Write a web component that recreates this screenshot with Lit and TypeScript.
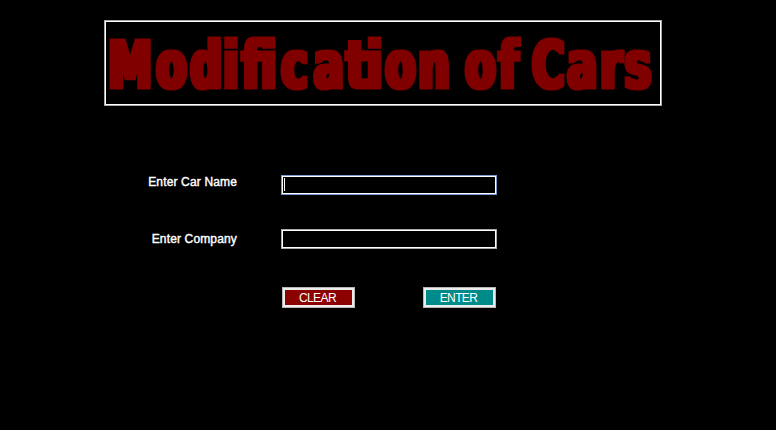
import { LitElement, html, css, svg } from "lit";
import { customElement } from "lit/decorators.js";

const SQUEEZE = 0.67;

interface Word {
  text: string;
  starts: number[];
}

// Origin of every letter, in pixels from the frame's inner edge.
const WORDS: Word[] = [
  { text: "Modification", starts: [3.6, 51.5, 85.5, 118.4, 137.2, 156.2, 176.4, 209, 241.4, 261.9, 280.6, 313.5] },
  { text: "of", starts: [360.6, 393.9] },
  { text: "Cars", starts: [427.3, 462.5, 495.5, 520] },
];

@customElement("app-root")
export class AppRoot extends LitElement {
  static styles = css`
    :host {
      display: block;
      box-sizing: border-box;
      width: 776px;
      height: 430px;
      padding: 20px 0 0 104px;
      background: #000;
      color: #fff;
      font-family: "Liberation Sans", Arial, sans-serif;
      overflow: hidden;
    }
    .title {
      box-sizing: border-box;
      width: 558px;
      height: 86px;
      margin: 0;
      border: 1px solid #a8a8a8;
      box-shadow: inset 0 0 0 1px #fff;
    }
    .title svg {
      display: block;
    }
    .title text {
      font: bold 65px "DejaVu Sans", sans-serif;
      fill: #800000;
      stroke: #800000;
      stroke-width: 2.8px;
    }
    .form {
      display: grid;
      grid-template-columns: 133px 216px;
      column-gap: 44px;
      row-gap: 34px;
      margin-top: 69px;
    }
    label {
      text-align: right;
      font-size: 12px;
      line-height: 14px;
      letter-spacing: 0.15px;
      -webkit-text-stroke: 0.4px #fff;
    }
    .company {
      padding-top: 3px;
    }
    .field {
      box-sizing: border-box;
      height: 20px;
      padding: 2px;
      border: 1px solid #aaa;
      box-shadow: inset 0 0 0 1px #fff;
    }
    .field.active {
      border-color: #7898d0;
    }
    .caret {
      width: 1px;
      height: 13px;
      background: #fff;
    }
    .actions {
      display: flex;
      gap: 68px;
      margin: 38px 0 0 178px;
    }
    button {
      box-sizing: border-box;
      width: 73px;
      height: 21px;
      padding: 1px 2px 0 0;
      border: 1px solid #b8b8b8;
      border-radius: 0;
      box-shadow: inset 0 0 0 2px #ececec;
      color: #fff;
      font: 12px/18px "Liberation Sans", Arial, sans-serif;
      letter-spacing: -0.6px;
    }
    .clear {
      background: #8b0000;
    }
    .enter {
      background: #008b8b;
    }
  `;

  render() {
    return html`
      <h1 class="title">
        <svg width="556" height="84" role="img" aria-label="Modification of Cars">
          <filter id="widen" filterUnits="userSpaceOnUse" x="0" y="0" width="556" height="84" color-interpolation-filters="sRGB">
            <feMorphology operator="dilate" radius="2 0.01"></feMorphology>
          </filter>
          <g filter="url(#widen)">
            <g transform="scale(${SQUEEZE} 1)">
              ${WORDS.map(
                (w) => svg`<text x=${w.starts.map((s) => (s / SQUEEZE).toFixed(1)).join(" ")} y="67">${w.text}</text>`
              )}
            </g>
          </g>
        </svg>
      </h1>
      <div class="form">
        <label>Enter Car Name</label>
        <div class="field active"><div class="caret"></div></div>
        <label class="company">Enter Company</label>
        <div class="field"></div>
      </div>
      <div class="actions">
        <button class="clear">CLEAR</button>
        <button class="enter">ENTER</button>
      </div>
    `;
  }
}
